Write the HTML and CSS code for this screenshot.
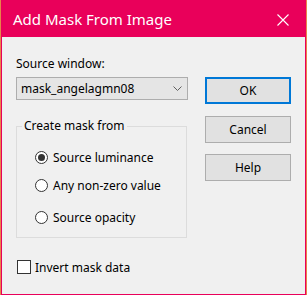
FILE: index.html
```html
<!DOCTYPE html>
<html>
<head>
<meta charset="utf-8">
<link rel="stylesheet" href="styles.css">
</head>
<body>
<div class="window">
  <div class="titlebar">
    <span class="title">Add Mask From Image</span>
    <svg class="close" width="12" height="12" viewBox="0 0 12 12"><path d="M0.5 0.5 L11.5 11.5 M11.5 0.5 L0.5 11.5" stroke="#fff" stroke-width="1.1" fill="none"/></svg>
  </div>
  <div class="content">
    <div class="left">
      <div class="label">Source window:</div>
      <div class="combo">
        <span>mask_angelagmn08</span>
        <svg class="chev" width="9" height="5" viewBox="0 0 9 5"><path d="M0.5 0.5 L4.5 4.5 L8.5 0.5" stroke="#606060" stroke-width="1" fill="none"/></svg>
      </div>
      <fieldset class="group">
        <legend>Create mask from</legend>
        <div class="radio r1"><span class="dot on"></span><span>Source luminance</span></div>
        <div class="radio r2"><span class="dot"></span><span>Any non-zero value</span></div>
        <div class="radio r3"><span class="dot"></span><span>Source opacity</span></div>
      </fieldset>
      <div class="check"><span class="box"></span><span>Invert mask data</span></div>
    </div>
    <div class="right">
      <div class="btn ok">OK</div>
      <div class="btn cancel">Cancel</div>
      <div class="btn help">Help</div>
    </div>
  </div>
</div>
</body>
</html>
```
FILE: styles.css
```css
html, body {
  margin: 0;
  padding: 0;
}
body {
  width: 307px;
  height: 295px;
  background: #e8834a;
  font-family: "Noto Sans", "Open Sans", sans-serif;
  font-size: 12px;
  color: #000;
  overflow: hidden;
}
.window {
  margin-left: 1px;
  width: 303px;
  height: 294px;
  border: 1px solid #e9005a;
  border-top: 0;
  background: #f0f0f0;
}
.titlebar {
  height: 37px;
  margin: 0 -1px;
  background: #e9005a;
  color: #fff;
  display: flex;
  align-items: center;
  padding-left: 12px;
  padding-right: 17px;
  box-sizing: border-box;
}
.title {
  font-size: 15px;
  flex: 1;
  margin-top: 1px;
}
.close {
  display: block;
  margin-top: 2px;
}
.content {
  display: flex;
  padding-top: 18px;
  padding-left: 14px;
}
.left {
  width: 172px;
}
.label {
  line-height: 17px;
  height: 17px;
}
.combo {
  margin-top: 5px;
  height: 23px;
  box-sizing: border-box;
  border: 1px solid #adadad;
  background: #e5e5e5;
  display: flex;
  align-items: center;
  padding-left: 4px;
  padding-right: 5px;
  justify-content: space-between;
}
.combo span {
  line-height: 16px;
}
.group {
  margin: 18px 0 0 0;
  padding: 0;
  border: 1px solid #dcdcdc;
  height: 120px;
  box-sizing: border-box;
  width: 171px;
}
.group legend {
  padding: 0 2px;
  margin-left: 5px;
  line-height: 16px;
}
.radio {
  display: flex;
  align-items: center;
  gap: 5px;
  height: 16px;
  margin-left: 18px;
}
.r1 { margin-top: 15px; }
.r2 { margin-top: 12px; }
.r3 { margin-top: 16px; }
.dot {
  width: 13px;
  height: 13px;
  box-sizing: border-box;
  border: 1px solid #333;
  border-radius: 50%;
  background: #fff;
  display: flex;
  align-items: center;
  justify-content: center;
}
.dot.on::after {
  content: "";
  width: 7px;
  height: 7px;
  border-radius: 50%;
  background: #333;
}
.check {
  margin-top: 21px;
  margin-left: 1px;
  display: flex;
  align-items: center;
  gap: 4px;
  height: 16px;
}
.box {
  width: 14px;
  height: 14px;
  box-sizing: border-box;
  border: 1px solid #333;
  background: #fff;
}
.right {
  margin-left: 17px;
  padding-top: 22px;
  width: 86px;
  display: flex;
  flex-direction: column;
}
.btn {
  height: 27px;
  box-sizing: border-box;
  border: 1px solid #adadad;
  background: #e1e1e1;
  display: flex;
  align-items: center;
  justify-content: center;
}
.btn.ok {
  border: 2px solid #0078d7;
}
.btn.cancel { margin-top: 12px; }
.btn.help { margin-top: 11px; }
```
